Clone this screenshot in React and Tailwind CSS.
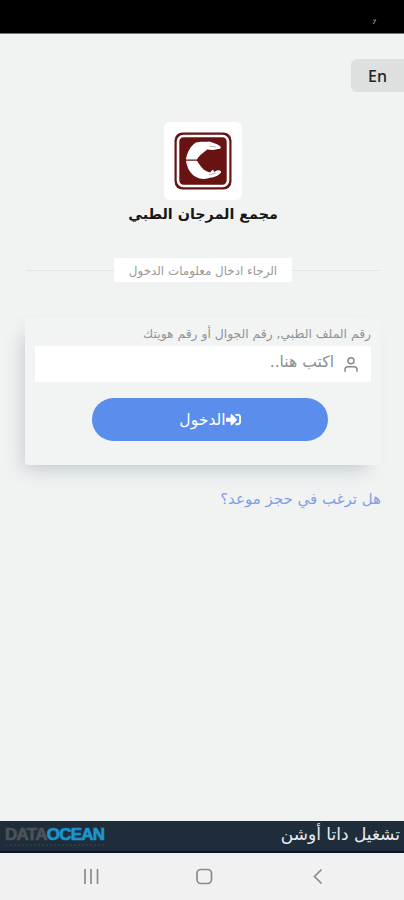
import React from "react";
import { FaSignInAlt } from "react-icons/fa";
import { FiUser } from "react-icons/fi";

const ClinicLogo = () => (
  <svg viewBox="0 0 58 58" className="h-[58px] w-[58px]">
    <rect x="0.5" y="0.5" width="57" height="57" rx="8" fill="#681212" />
    <rect x="4" y="4" width="50" height="50" rx="5.5" fill="none" stroke="#fff" strokeWidth="2.6" />
    <path
      d="M12 27.500 C13 21 16 14 22 10.500 C26 9 31 10 35 9.500 C38 10 43 12 46 14 C48 16 46 17.500 44 17 L39 18 L33 17.500 C31 20 26 22 23 27.500 Z"
      fill="#fff"
    />
    <path
      d="M12 28.700 C13 35 16 42 22 45 C26 47.500 32 47.500 37 45.500 C41 45.500 45 43 47 40.500 C47.500 38.500 45 38 43 38.500 L40 40 L39 37.500 L36 40.500 L32 39 C28 37 26 33 23 28.700 Z"
      fill="#fff"
    />
    <path d="M35 14l7 1M35 43l7-2" stroke="#b79a9a" strokeWidth="0.8" />
  </svg>
);

const StatusBar = () => (
  <div dir="ltr" className="flex h-[34px] shrink-0 justify-end border-b border-[#777] bg-black pr-[28px] pt-[17px]">
    <span className="text-[6px] italic leading-[10px] text-gray-300">7</span>
  </div>
);

const LoginCard = () => (
  <div className="ml-[25px] mr-[23px] mt-[36px] flex h-[147px] flex-col rounded-[3px] bg-[#f2f4f4] px-[10px] shadow-[-7px_10px_18px_-6px_rgba(70,90,105,0.28)]">
    <label className="mt-[5px] h-[23px] w-full whitespace-nowrap text-[12.35px] leading-[22px] text-[#8f9395]">
      رقم الملف الطبي, رقم الجوال أو رقم هويتك
    </label>
    <div className="flex h-[36px] w-full shrink-0 items-center bg-white px-[11px]">
      <FiUser className="h-[19px] w-[18px] text-[#888]" />
      <span className="mr-[8px] pb-[5px] text-[15.6px] leading-[30px] text-[#8b8f92]">اكتب هنا..</span>
    </div>
    <button className="mr-[43px] mt-[16px] flex h-[43px] w-[236px] shrink-0 items-center justify-center rounded-full bg-[#5a8dec] text-white">
      <FaSignInAlt className="h-[15px] w-[15px]" />
      <span className="text-[15.6px] leading-[30px]">الدخول</span>
    </button>
  </div>
);

const Footer = () => (
  <div className="flex h-[32px] shrink-0 justify-between border-b-2 border-[#0c1426] bg-[#1f2d3a] pl-[5px] pr-[4px]">
    <span className="text-[17px] leading-[27px] text-[#e8ecef]">تشغيل داتا أوشن</span>
    <div dir="ltr" className="w-[99px] pt-[5px]">
      <p className="whitespace-nowrap font-['Liberation_Sans',sans-serif] text-[17px] font-bold leading-[18px] tracking-[-0.75px] text-[#4c5258] [-webkit-text-stroke:0.7px]">
        DATA<span className="text-[#1b94d0]">OCEAN</span>
      </p>
      <div className="border-t-2 border-dotted border-[#2d3944]" />
    </div>
  </div>
);

const NavBar = () => (
  <div dir="ltr" className="h-[47px] shrink-0 bg-[#f1f1f1]">
    <svg viewBox="0 0 404 47" className="h-[47px] w-[404px]" fill="none" stroke="#8a8a8a" strokeWidth="1.7">
      <path d="M85 16v15M91 16v15M97.500 16v15" />
      <rect x="197" y="16.500" width="14.500" height="14" rx="4" />
      <path d="M321.500 16.500l-7 7 7 7" />
    </svg>
  </div>
);

const App = () => {
  return (
    <div dir="rtl" className="flex h-[900px] w-[404px] flex-col overflow-hidden bg-[#f1f3f3] font-['DejaVu_Sans',sans-serif]">
      <StatusBar />
      <div dir="ltr" className="mt-[25px] flex justify-end">
        <button className="h-[33px] w-[53px] rounded-l-[6px] bg-[#dedfdf] font-['Noto_Sans',sans-serif] text-[16px] font-medium text-[#222]">
          En
        </button>
      </div>
      <div className="ml-[2px] mt-[30px] flex flex-col items-center">
        <div className="flex h-[78px] w-[78px] items-center justify-center rounded-[6px] bg-white">
          <ClinicLogo />
        </div>
        <h1 className="text-[14.3px] font-bold leading-[28px] text-[#161616]">مجمع المرجان الطبي</h1>
      </div>
      <div className="ml-[26px] mr-[24px] mt-[30px] flex items-center">
        <div className="h-px flex-1 bg-[#e3e6e6]" />
        <span className="h-[24px] w-[178px] whitespace-nowrap bg-white text-center text-[11.9px] leading-[26px] text-[#999]">
          الرجاء ادخال معلومات الدخول
        </span>
        <div className="h-px flex-1 bg-[#e3e6e6]" />
      </div>
      <LoginCard />
      <a href="#" className="mr-[23px] mt-[20px] self-start text-[15px] leading-[28px] text-[#7d9fe6]">
        هل ترغب في حجز موعد؟
      </a>
      <div className="flex-1" />
      <Footer />
      <NavBar />
    </div>
  );
};

export default App;
